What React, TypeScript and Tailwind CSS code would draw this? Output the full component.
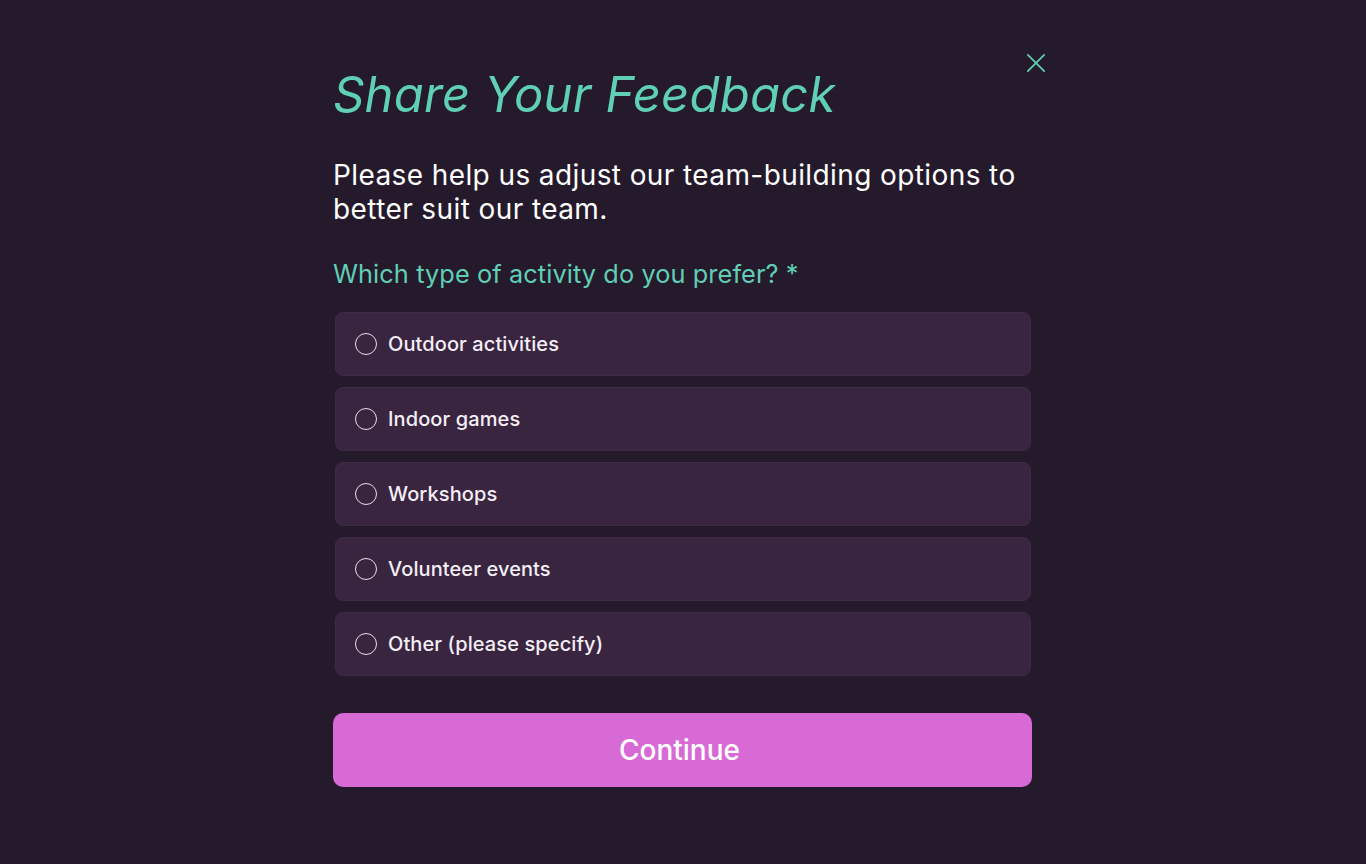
import React, { useState } from "react";

const OPTIONS = [
  "Outdoor activities",
  "Indoor games",
  "Workshops",
  "Volunteer events",
  "Other (please specify)",
];

export default function App() {
  const [picked, setPicked] = useState<string | null>(null);

  return (
    <div className="min-h-[864px] bg-[#251a2b] flex justify-center" style={{ fontFamily: "Inter, 'Noto Sans', sans-serif" }}>
      <div className="relative w-[700px] pt-[64px]">
        <button className="absolute right-[-13px] top-[53px] text-[#5fcfb6]" aria-label="Close">
          <svg width="20" height="20" viewBox="0 0 22 22" fill="none" stroke="currentColor" strokeWidth="1.9" strokeLinecap="round">
            <path d="M2 2 L20 20 M20 2 L2 20" />
          </svg>
        </button>

        <h1 className="text-[49px] leading-[62px] italic text-[#5fcfb6] font-normal tracking-[0.2px]">Share Your Feedback</h1>

        <p className="mt-[32px] text-[28px] leading-[34px] text-white tracking-[0.4px]">
          Please help us adjust our team-building options to better suit our team.
        </p>

        <h2 className="mt-[32px] text-[25.3px] leading-[32px] text-[#5fcfb6] tracking-[0.1px]">
          Which type of activity do you prefer? *
        </h2>

        <div className="mt-[22px] flex flex-col gap-[11px] pl-[2px] pr-[2px]">
          {OPTIONS.map((o) => (
            <label
              key={o}
              onClick={() => setPicked(o)}
              className="h-[64px] rounded-[8px] bg-[#3a2541] border border-[#3f2a46] flex items-center pl-[19px] pr-[20px] gap-[11px] cursor-pointer"
            >
              <span className="w-[22px] h-[22px] rounded-full border-[1.5px] border-[#e8dfe9] flex items-center justify-center">
                {picked === o && <span className="w-[12px] h-[12px] rounded-full bg-[#5fcfb6]" />}
              </span>
              <span className="text-[20px] font-medium text-[#f4eef5] tracking-[0.1px]">{o}</span>
            </label>
          ))}
        </div>

        <button className="mt-[37px] w-[699px] h-[74px] rounded-[10px] bg-[#d86ad6] text-white text-[28px] font-medium pr-[6px]">
          Continue
        </button>
      </div>
    </div>
  );
}
